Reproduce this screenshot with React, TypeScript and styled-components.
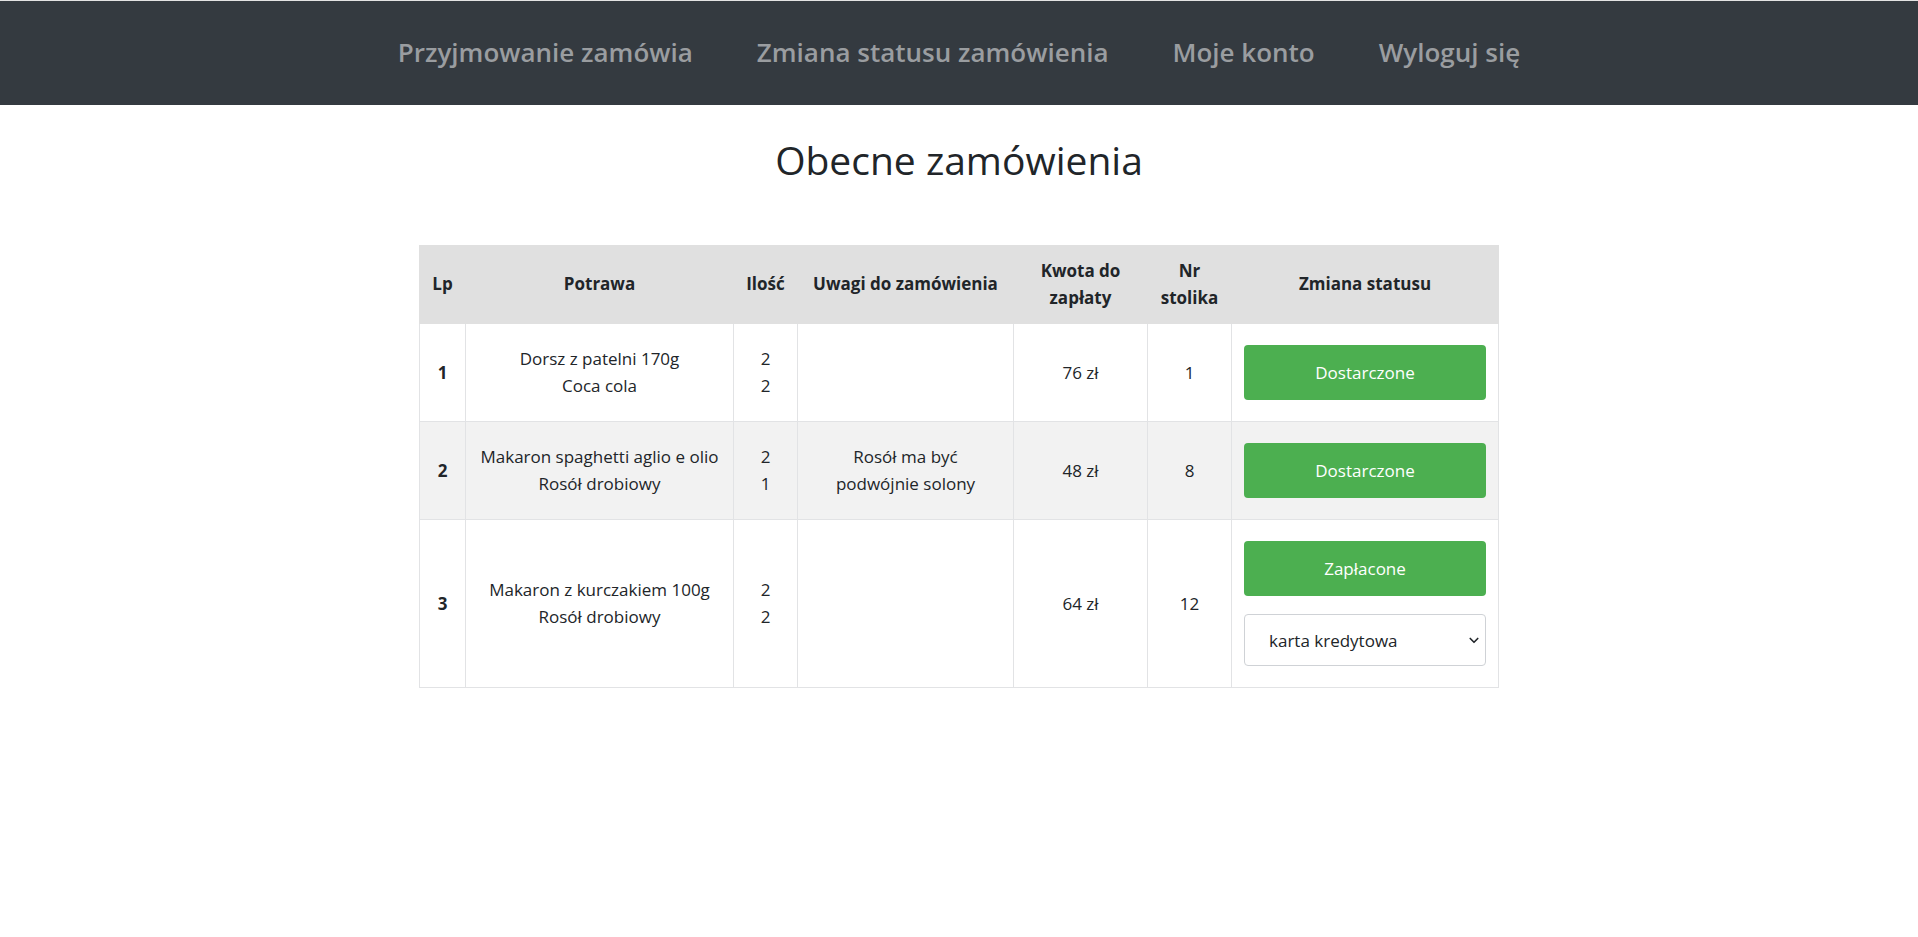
import React from "react";
import styled, { createGlobalStyle } from "styled-components";

const GlobalStyle = createGlobalStyle`
  html, body { margin: 0; padding: 0; background: #ffffff; }
  body {
    font-family: "Open Sans", "Noto Sans", "Liberation Sans", sans-serif;
    color: #212529;
  }
  * { box-sizing: border-box; }
`;

const NavBar = styled.nav`
  height: 105px;
  border-top: 1px solid #e3e3e3;
  background: #343a40;
  display: flex;
  justify-content: center;
  align-items: center;
  gap: 64px;
  padding-bottom: 2px;
`;

const NavLink = styled.a`
  font-size: 26px;
  font-weight: 600;
  color: #9a9da0;
  text-decoration: none;
  cursor: pointer;
  white-space: nowrap;
`;

const Title = styled.h1`
  margin: 32px 0 62px;
  text-align: center;
  font-size: 39px;
  font-weight: 500;
  line-height: 46px;
  color: #212529;
`;

const Table = styled.table`
  width: 1079px;
  margin: 0 auto;
  border-collapse: collapse;
  table-layout: fixed;
  border: 1px solid #e0e0e0;
  font-size: 17px;
  line-height: 26.7px;
`;

const HeadRow = styled.tr`
  background: #e0e0e0;
`;

const Th = styled.th`
  padding: 12px 6px;
  font-weight: 700;
  text-align: center;
  vertical-align: middle;
  border: 1px solid #e0e0e0;
  color: #212529;
`;

const Row = styled.tr<{ $striped?: boolean }>`
  background: ${(p) => (p.$striped ? "#f2f2f2" : "#ffffff")};
`;

const Td = styled.td<{ $bold?: boolean }>`
  padding: 12px 12px;
  text-align: center;
  vertical-align: middle;
  border: 1px solid #e2e3e5;
  font-weight: ${(p) => (p.$bold ? 700 : 400)};
  color: #212529;
`;

const Line = styled.div`
  white-space: nowrap;
`;

const StatusCell = styled.div`
  display: flex;
  flex-direction: column;
  gap: 18px;
  padding: 9px 0;
`;

const StatusButton = styled.button`
  width: 100%;
  height: 55px;
  border: none;
  border-radius: 4px;
  background: #4caf50;
  color: #ffffff;
  font-family: inherit;
  font-size: 17px;
  cursor: pointer;
`;

const SelectWrap = styled.div`
  position: relative;
  width: 100%;
`;

const Select = styled.select`
  appearance: none;
  -webkit-appearance: none;
  width: 100%;
  height: 52px;
  padding: 0 30px 0 24px;
  border: 1px solid #cfd2d6;
  border-radius: 4px;
  background: #ffffff;
  color: #212529;
  font-family: inherit;
  font-size: 17px;
  outline: none;
`;

const Chevron = styled.svg`
  position: absolute;
  right: 6px;
  top: 50%;
  transform: translateY(-50%);
  pointer-events: none;
`;

type Order = {
  lp: number;
  dishes: string[];
  qty: number[];
  notes: string[];
  amount: string;
  table: number;
  status: "Dostarczone" | "Zapłacone";
};

const orders: Order[] = [
  { lp: 1, dishes: ["Dorsz z patelni 170g", "Coca cola"], qty: [2, 2], notes: [], amount: "76 zł", table: 1, status: "Dostarczone" },
  { lp: 2, dishes: ["Makaron spaghetti aglio e olio", "Rosół drobiowy"], qty: [2, 1], notes: ["Rosół ma być", "podwójnie solony"], amount: "48 zł", table: 8, status: "Dostarczone" },
  { lp: 3, dishes: ["Makaron z kurczakiem 100g", "Rosół drobiowy"], qty: [2, 2], notes: [], amount: "64 zł", table: 12, status: "Zapłacone" },
];

const widths = [46, 268, 64, 216, 134, 84, 267];

export default function App() {
  return (
    <>
      <GlobalStyle />
      <NavBar>
        <NavLink>Przyjmowanie zamówia</NavLink>
        <NavLink>Zmiana statusu zamówienia</NavLink>
        <NavLink>Moje konto</NavLink>
        <NavLink>Wyloguj się</NavLink>
      </NavBar>
      <Title>Obecne zamówienia</Title>
      <Table>
        <colgroup>
          {widths.map((w, i) => (
            <col key={i} style={{ width: w }} />
          ))}
        </colgroup>
        <thead>
          <HeadRow>
            <Th>Lp</Th>
            <Th>Potrawa</Th>
            <Th>Ilość</Th>
            <Th>Uwagi do zamówienia</Th>
            <Th>Kwota do zapłaty</Th>
            <Th>Nr stolika</Th>
            <Th>Zmiana statusu</Th>
          </HeadRow>
        </thead>
        <tbody>
          {orders.map((o, i) => (
            <Row key={o.lp} $striped={i % 2 === 1}>
              <Td $bold>{o.lp}</Td>
              <Td>
                {o.dishes.map((d) => (
                  <Line key={d}>{d}</Line>
                ))}
              </Td>
              <Td>
                {o.qty.map((q, j) => (
                  <Line key={j}>{q}</Line>
                ))}
              </Td>
              <Td>
                {o.notes.map((n) => (
                  <Line key={n}>{n}</Line>
                ))}
              </Td>
              <Td>{o.amount}</Td>
              <Td>{o.table}</Td>
              <Td>
                <StatusCell>
                  <StatusButton>{o.status}</StatusButton>
                  {o.status === "Zapłacone" && (
                    <SelectWrap>
                      <Select defaultValue="karta">
                        <option value="karta">karta kredytowa</option>
                        <option value="gotowka">gotówka</option>
                      </Select>
                      <Chevron width="12" height="12" viewBox="0 0 16 16">
                        <path d="M3 6l5 5 5-5" fill="none" stroke="#212529" strokeWidth="2.2" strokeLinecap="round" strokeLinejoin="round" />
                      </Chevron>
                    </SelectWrap>
                  )}
                </StatusCell>
              </Td>
            </Row>
          ))}
        </tbody>
      </Table>
    </>
  );
}
